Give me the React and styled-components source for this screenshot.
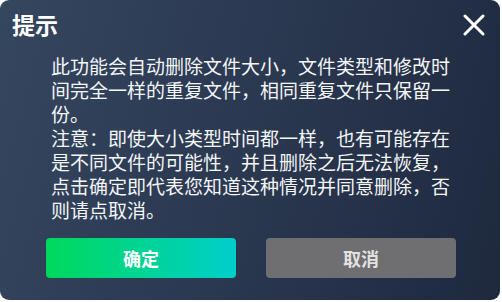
import styled, { createGlobalStyle } from 'styled-components'

const Global = createGlobalStyle`
  html, body {
    margin: 0;
    padding: 0;
    background: #ffffff;
  }
  * { box-sizing: border-box; }
`;

const Dialog = styled.div`
  width: 500px;
  height: 300px;
  border-radius: 9px;
  background: linear-gradient(105deg, #35465f 0%, #2a3850 50%, #1e293e 100%);
  display: flex;
  flex-direction: column;
  font-family: "Noto Sans CJK SC", "Microsoft YaHei", sans-serif;
  color: #ffffff;
  overflow: hidden;
`;

const Header = styled.div`
  height: 48px;
  display: flex;
  justify-content: space-between;
  align-items: flex-start;
  padding: 10px 13px 0 12px;
`;

const Title = styled.h1`
  margin: 0;
  font-size: 23px;
  line-height: 28px;
  font-weight: 700;
`;

const Close = styled.button`
  width: 26px;
  height: 26px;
  border: none;
  background: none;
  padding: 0;
  margin-top: 2px;
  display: flex;
  align-items: center;
  justify-content: center;
  cursor: pointer;
`;

const Message = styled.div`
  width: 460px;
  padding-left: 51px;
  font-size: 19px;
  line-height: 24px;
  color: #f4f6f8;
  margin-top: 6px;
`;

const Para = styled.p`
  margin: 0;
`;

const Actions = styled.div`
  display: flex;
  gap: 30px;
  padding-left: 46px;
  margin-top: 16px;
`;

const Button = styled.button`
  width: 190px;
  height: 40px;
  border: none;
  border-radius: 4px;
  font-family: inherit;
  font-size: 18px;
  font-weight: 700;
  cursor: pointer;
  color: ${p => (p.$primary ? '#ffffff' : '#e2e2e2')};
  background: ${p =>
    p.$primary
      ? 'linear-gradient(90deg, #00d95c 0%, #00cfcb 100%)'
      : '#6f6f71'};
`;

function App() {
  return (
    <>
      <Global />
      <Dialog>
        <Header>
          <Title>提示</Title>
          <Close aria-label="关闭">
            <svg width="22" height="22" viewBox="0 0 22 22">
              <path d="M2 2L20 20M20 2L2 20" stroke="#ffffff" strokeWidth="3" strokeLinecap="round" />
            </svg>
          </Close>
        </Header>
        <Message>
          <Para>此功能会自动删除文件大小，文件类型和修改时间完全一样的重复文件，相同重复文件只保留一份。</Para>
          <Para>注意：即使大小类型时间都一样，也有可能存在是不同文件的可能性，并且删除之后无法恢复，点击确定即代表您知道这种情况并同意删除，否则请点取消。</Para>
        </Message>
        <Actions>
          <Button $primary>确定</Button>
          <Button>取消</Button>
        </Actions>
      </Dialog>
    </>
  )
}

export default App
